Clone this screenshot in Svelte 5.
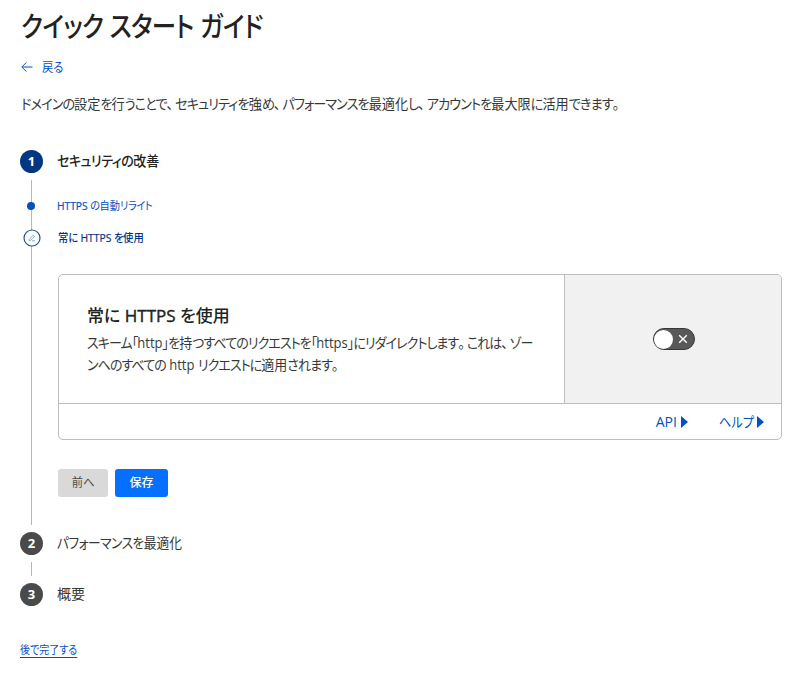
<script lang="ts">
  interface SubStep {
    label: string;
    editing: boolean;
  }

  const subSteps: SubStep[] = [
    { label: 'HTTPS の自動リライト', editing: false },
    { label: '常に HTTPS を使用', editing: true },
  ];

  let enabled = $state(false);

  // Kana are set tighter than kanji, so text is split into runs
  const runs = (text: string) =>
    text.split(/([、。]|[\u300c-\u30ff]+|[A-Za-z]+)/).filter(Boolean);
  const isKana = (run: string) => /^[\u300c-\u30ff]/.test(run);
  const isStop = (run: string) => /^[、。]/.test(run);
  const isLatin = (run: string) => /^[A-Za-z]/.test(run);
</script>

{#snippet jp(text: string)}{#each runs(text) as run}<span class:kana={isKana(run)} class:stop={isStop(run)} class:latin={isLatin(run)}>{run}</span>{/each}{/snippet}

<main class="guide">
  <h1><span class="fit">{@render jp('クイック スタート ガイド')}</span></h1>

  <a class="back" href="#back">
    <svg width="13" height="12" viewBox="0 0 13 12" aria-hidden="true">
      <path d="M12.5 6H2M6.3 1.5L1.8 6L6.3 10.5" />
    </svg>
    <span class="fit">戻る</span>
  </a>

  <p class="intro">
    <span class="fit">{@render jp('ドメインの設定を行うことで、セキュリティを強め、パフォーマンスを最適化し、アカウントを最大限に活用できます。')}</span>
  </p>

  <section class="step">
    <div class="step-head active">
      <span class="number">1</span>
      <h2><span class="fit">{@render jp('セキュリティの改善')}</span></h2>
    </div>

    <div class="step-body">
      {#each subSteps as step}
        <div class="sub-step" class:editing={step.editing}>
          <span class="marker">
            {#if step.editing}
              <svg width="18" height="18" viewBox="0 0 18 18" aria-hidden="true">
                <circle cx="9" cy="9" r="8" />
                <path class="pencil" d="M6.3 10.3L10.2 6.1L11.5 7.3L7.6 11.3L6 11.6ZM9 11.8H12" />
              </svg>
            {:else}
              <i class="dot"></i>
            {/if}
          </span>
          <span class="sub-label fit">{@render jp(step.label)}</span>
        </div>
      {/each}

      <div class="card">
        <div class="card-main">
          <div class="card-text">
            <h3>{@render jp('常に HTTPS を使用')}</h3>
            <p>
              <span class="fit">{@render jp('スキーム「http」を持つすべてのリクエストを「https」にリダイレクトします。これは、ゾー')}</span><br />
              <span class="fit">{@render jp('ンへのすべての http リクエストに適用されます。')}</span>
            </p>
          </div>
          <div class="card-control">
            <button
              class="toggle"
              class:on={enabled}
              role="switch"
              aria-checked={enabled}
              aria-label="常に HTTPS を使用"
              onclick={() => (enabled = !enabled)}
            >
              <span class="knob"></span>
              <svg width="10" height="10" viewBox="0 0 10 10" aria-hidden="true">
                <path d="M1.2 1.2L8.8 8.8M8.8 1.2L1.2 8.8" />
              </svg>
            </button>
          </div>
        </div>
        <div class="card-footer">
          <a href="#api"><span>API</span><i class="caret"></i></a>
          <a href="#help"><span class="help fit">ヘルプ</span><i class="caret"></i></a>
        </div>
      </div>

      <div class="actions">
        <button class="prev"><span class="fit">前へ</span></button>
        <button class="save">保存</button>
      </div>
    </div>
  </section>

  <div class="step-head">
    <span class="number">2</span>
    <h2><span class="fit">{@render jp('パフォーマンスを最適化')}</span></h2>
  </div>
  <div class="connector"></div>
  <div class="step-head">
    <span class="number">3</span>
    <h2>概要</h2>
  </div>

  <a class="later fit" href="#later">後で完了する</a>
</main>

<style>
  :global(body) {
    background: #fff;
  }

  .guide {
    box-sizing: border-box;
    width: 800px;
    height: 676px;
    padding: 6px 18px 0 20px;
    overflow: hidden;
    color: #36393a;
    font-family: 'Open Sans', 'Noto Sans CJK JP', sans-serif;
    font-size: 14px;
    font-feature-settings: 'palt';
    white-space: nowrap;
  }

  h1,
  h2,
  h3,
  p {
    margin: 0;
  }

  a {
    color: #0051c3;
    text-decoration: none;
  }

  button {
    border: 0;
    padding: 0;
    font: inherit;
    font-feature-settings: inherit;
  }

  /* condensed text */
  .fit {
    display: inline-block;
    transform: scaleX(var(--fit, 0.94));
    transform-origin: left center;
  }

  .kana {
    letter-spacing: var(--kana, -0.066em);
  }

  .stop {
    letter-spacing: 0.15em;
  }

  h1 {
    --fit: 0.873;
    --kana: -0.023em;
    height: 40px;
    padding-left: 1px;
    line-height: 40px;
    color: #222;
    font-size: 28px;
    font-weight: 500;
  }

  .back {
    display: flex;
    align-items: center;
    gap: 9px;
    height: 20px;
    margin-top: 11px;
    margin-bottom: 1px;
    font-size: 12px;
  }

  .back svg {
    fill: none;
    stroke: #0051c3;
  }

  .intro {
    --fit: 0.939;
    --kana: -0.072em;
    height: 22px;
    margin-top: 16px;
    padding-left: 1px;
    line-height: 22px;
  }

  .step {
    margin-top: 35px;
  }

  .step-head {
    --fit: 0.91;
    --kana: -0.04em;
    display: flex;
    align-items: center;
    gap: 14px;
    height: 23px;
  }

  .step-head.active {
    --fit: 0.93;
  }

  .number {
    width: 23px;
    height: 23px;
    border-radius: 50%;
    background: #4a4a4a;
    color: #fff;
    font-size: 13px;
    font-weight: 700;
    line-height: 23px;
    text-align: center;
  }

  .step-head h2 {
    padding-bottom: 1px;
    font-size: 14px;
    font-weight: 400;
    line-height: 22px;
  }

  .active .number {
    background: #003682;
  }

  .step-head.active h2 {
    color: #222;
    font-weight: 500;
  }

  .step-body {
    position: relative;
    height: 345px;
    margin: 7px 0;
    padding-top: 10px;
    box-sizing: border-box;
  }

  /* vertical rail behind the markers */
  .step-body::before {
    content: '';
    position: absolute;
    top: 0;
    bottom: 0;
    left: 11px;
    width: 1px;
    background: #b6b6b6;
  }

  .sub-step {
    --fit: 0.93;
    --kana: -0.05em;
    display: flex;
    align-items: center;
    height: 32px;
    color: #0051c3;
    font-size: 11px;
  }

  .sub-label {
    padding-bottom: 2px;
  }

  .marker {
    position: relative;
    display: flex;
    justify-content: center;
    width: 23px;
    margin-right: 14px;
  }

  .marker svg {
    margin-left: 1px;
    fill: #fff;
    stroke: #1f4f99;
    stroke-width: 1.2;
  }

  .marker .pencil {
    stroke: #6b96d4;
    stroke-width: 0.8;
  }

  .dot {
    width: 8px;
    height: 8px;
    margin-right: 1px;
    border-radius: 50%;
    background: #0051c3;
  }

  .editing {
    --fit: 0.94;
    color: #003682;
    font-weight: 500;
  }

  .editing .marker {
    margin-right: 15px;
  }

  .sub-step .latin {
    -webkit-text-stroke: 0.2px currentColor;
  }

  .card {
    box-sizing: border-box;
    height: 166px;
    margin: 20px 0 0 38px;
    border: 1px solid #bdbdbd;
    border-radius: 5px;
    overflow: hidden;
  }

  .card-main {
    display: flex;
    height: 128px;
    border-bottom: 1px solid #bdbdbd;
  }

  .card-text {
    flex: 1;
    min-width: 0;
    padding: 27px 0 0 28px;
  }

  .card-text h3 {
    --kana: 0;
    height: 30px;
    color: #222;
    font-size: 17px;
    font-weight: 500;
    line-height: 28px;
  }

  h3 .latin {
    -webkit-text-stroke: 0.4px currentColor;
  }

  .card-text p {
    --fit: 0.93;
    --kana: -0.073em;
    line-height: 22px;
  }

  .card-control {
    display: flex;
    flex: none;
    align-items: center;
    justify-content: center;
    box-sizing: border-box;
    width: 217px;
    padding-left: 1px;
    border-left: 1px solid #bdbdbd;
    background: #f1f1f1;
  }

  .toggle {
    display: flex;
    align-items: center;
    justify-content: space-between;
    box-sizing: border-box;
    width: 42px;
    height: 22px;
    padding: 0 6px 0 0;
    border: 1px solid #36393a;
    border-radius: 11px;
    background: #595959;
  }

  .toggle.on {
    flex-direction: row-reverse;
    padding: 0 0 0 6px;
    background: #2db35e;
  }

  .knob {
    width: 19px;
    height: 19px;
    border-radius: 50%;
    background: #fff;
  }

  .toggle svg {
    fill: none;
    stroke: #fff;
    stroke-width: 1.4;
  }

  .card-footer {
    display: flex;
    align-items: center;
    justify-content: flex-end;
    gap: 31px;
    height: 35px;
    padding-right: 17px;
  }

  .card-footer a {
    display: flex;
    align-items: center;
    gap: 4px;
  }

  .help {
    --fit: 0.87;
    margin-right: -6px;
    padding-bottom: 2px;
  }

  .caret {
    border: solid transparent;
    border-width: 6px 0 6px 7px;
    border-left-color: #0051c3;
  }

  .actions {
    display: flex;
    gap: 7px;
    margin: 29px 0 0 38px;
  }

  .actions button {
    width: 50px;
    height: 28px;
    border-radius: 3px;
    background: #d9d9d9;
    color: #4a4a4a;
    font-size: 12px;
    line-height: 26px;
  }

  .prev span {
    padding-left: 3px;
  }

  .actions .save {
    width: 53px;
    background: #056fff;
    color: #fff;
    font-weight: 500;
  }

  .connector {
    width: 1px;
    height: 14px;
    margin: 7px 0 7px 11px;
    background: #b6b6b6;
  }

  .later {
    --fit: 0.91;
    height: 15px;
    margin-top: 36px;
    border-bottom: 1px solid #0051c3;
    font-size: 11px;
    line-height: 15px;
  }
</style>
